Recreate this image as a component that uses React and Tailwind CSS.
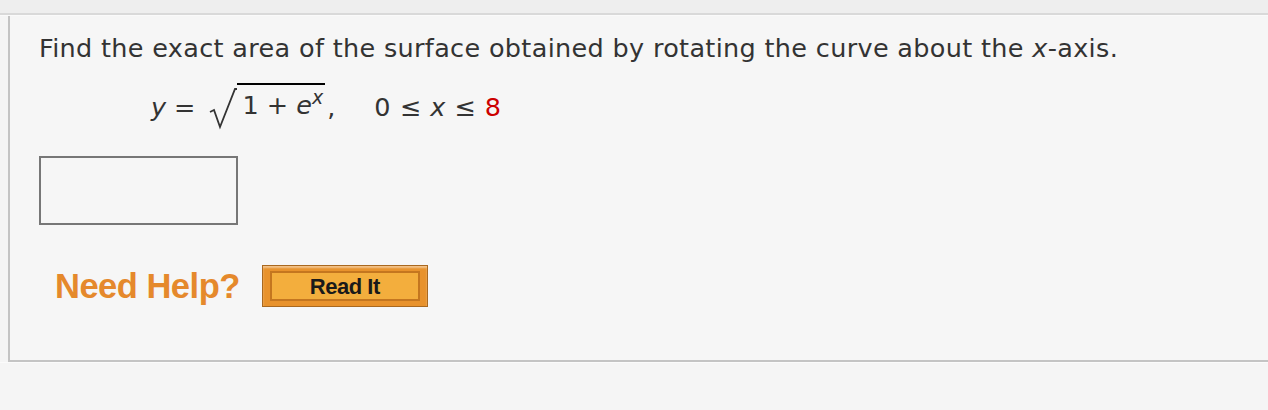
import React from 'react';

const App = () => {
  return (
    <div className="w-[1268px] h-[410px] bg-[#f5f5f5] overflow-hidden" style={{ fontFamily: '"DejaVu Sans", Verdana, sans-serif' }}>
      <div className="h-[13px] bg-[#eeeeee]" />
      <div className="h-[2px] bg-[#d9d9d9]" />
      <div className="h-px bg-[#fafafa]" />
      <div className="ml-2 border-l-2 border-b-2 border-[#c4c4c4] bg-[#f6f6f6] h-[346px] pl-[29px] pt-[16px]">
        <p className="text-[25.5px] leading-[32px] text-[#333] whitespace-nowrap tracking-[0.33px]">
          Find the exact area of the surface obtained by rotating the curve about the <i>x</i>-axis.
        </p>
        <div className="mt-[21px] ml-[112px] flex items-end text-[25.5px] leading-[32px] text-[#333] whitespace-nowrap">
          <i>y</i>
          <span className="ml-[8px]">=</span>
          <span className="ml-[14px] flex items-end">
            <svg width="28" height="42" viewBox="0 0 28 42" className="mb-[-7px]">
              <path d="M1 24 L5 22 L11 39 L26 1 L28 1" fill="none" stroke="#333" strokeWidth="1.8" />
            </svg>
            <span className="border-t-2 border-black pt-[4px] pl-[5px] pr-[2px] mt-[-2px]">
              1 + <i>e</i><span className="text-[19px] relative top-[-10px]"><i>x</i></span>
            </span>
          </span>
          <span className="ml-[2px]">,</span>
          <span className="ml-[39px] tracking-[0.5px]">0 ≤ <i>x</i> ≤ <span className="text-[#cc0000]">8</span></span>
        </div>
        <div className="mt-[33px] w-[199px] h-[69px] border-2 border-[#777777]" />
        <div className="mt-[40px] ml-[16px] flex items-center gap-[22px]">
          <span className="text-[34.5px] leading-[40px] font-bold text-[#e5892c] tracking-[-0.5px]" style={{ fontFamily: '"Liberation Sans", Arial, sans-serif' }}>
            Need Help?
          </span>
          <button
            className="w-[166px] h-[42px] bg-[#e8922c] border border-[#a9681f] px-[7px] py-[5px] shadow-[inset_0_2px_2px_rgba(255,255,255,0.45)]"
          >
            <div className="h-full border-2 border-[#c4761f] bg-[#f3ae3d] flex items-center justify-center text-[22px] font-bold text-[#1a1a1a] pt-[1px] tracking-[-0.5px]" style={{ fontFamily: '"Liberation Sans", Arial, sans-serif' }}>
              Read It
            </div>
          </button>
        </div>
      </div>
      <div className="h-px bg-[#fbfbfb]" />
    </div>
  );
};

export default App;
